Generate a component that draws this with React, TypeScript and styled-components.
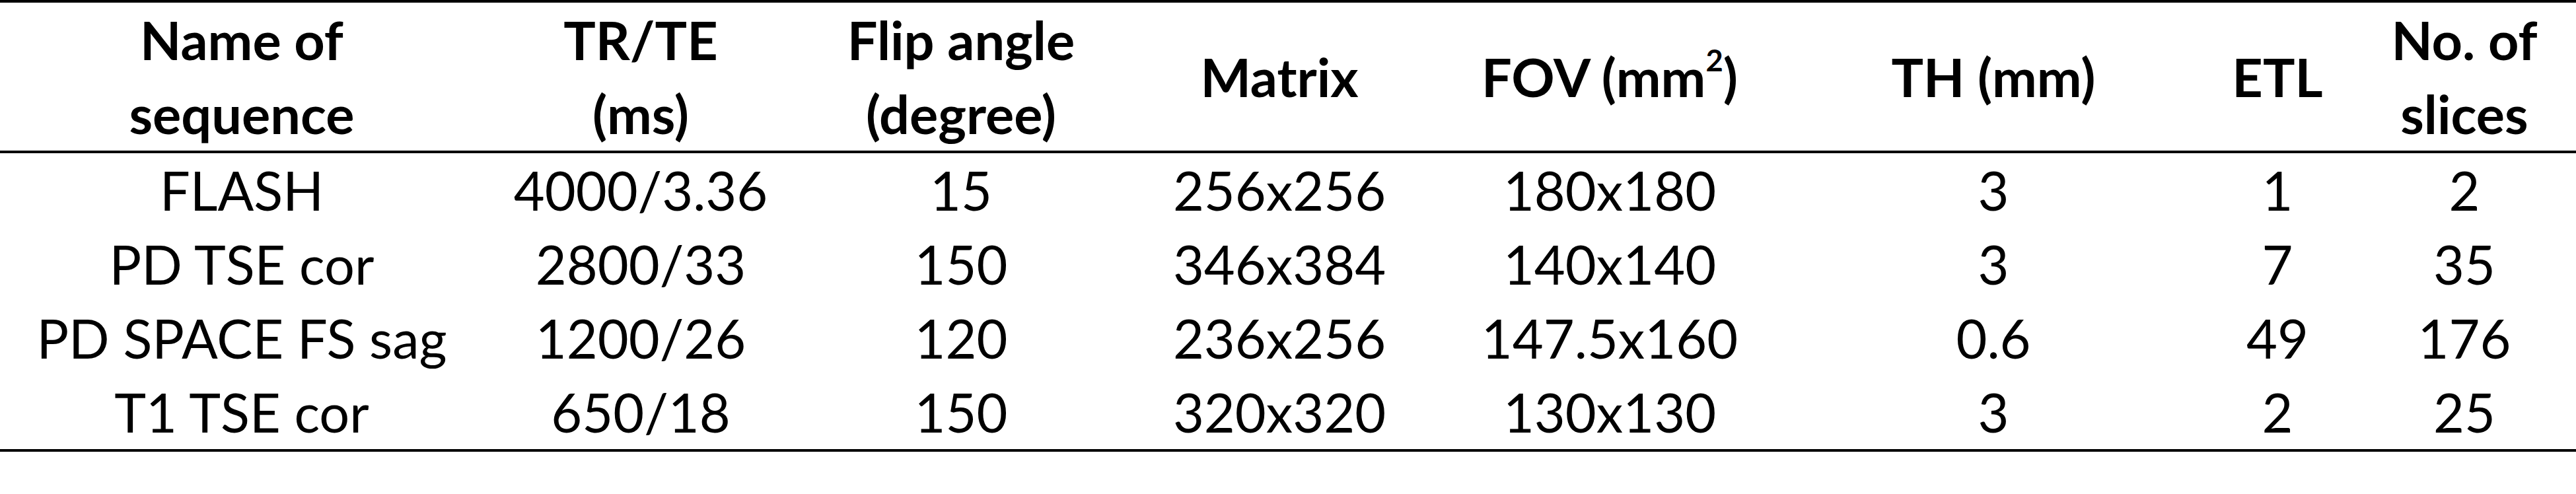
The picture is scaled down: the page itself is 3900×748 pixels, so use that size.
import React from "react";
import styled, { createGlobalStyle, css } from "styled-components";

const Global = createGlobalStyle`
  html, body {
    margin: 0;
    padding: 0;
    background: #ffffff;
  }
  body {
    font-family: Lato, "Open Sans", sans-serif;
    color: #000000;
  }
`;

const columns = css`
  display: grid;
  grid-template-columns: 732px 476px 494px 470px 530px 632px 228px 338px;
`;

const Table = styled.div`
  width: 3900px;
  border-top: 4px solid #000;
  border-bottom: 4px solid #000;
`;

const HeaderRow = styled.div`
  ${columns};
  height: 224px;
  border-bottom: 4px solid #000;
`;

const HeadCell = styled.div`
  display: flex;
  align-items: center;
  justify-content: center;
  text-align: center;
  font-weight: 700;
  font-size: 81px;
  line-height: 112px;
  white-space: nowrap;
`;

const Sup = styled.sup`
  font-size: 0.56em;
  line-height: 0;
  vertical-align: 0;
  position: relative;
  top: -0.85em;
`;

const Body = styled.div`
  display: flex;
  flex-direction: column;
`;

const Row = styled.div`
  ${columns};
  height: 112px;
`;

const Cell = styled.div`
  text-align: center;
  font-weight: 400;
  font-size: 81px;
  line-height: 112px;
  white-space: nowrap;
`;

const headers: React.ReactNode[] = [
  <>Name of<br />sequence</>,
  <>TR/TE<br />(ms)</>,
  <>Flip angle<br />(degree)</>,
  <>Matrix</>,
  <>FOV (mm<Sup>2</Sup>)</>,
  <>TH (mm)</>,
  <>ETL</>,
  <>No. of<br />slices</>,
];

const rows: string[][] = [
  ["FLASH", "4000/3.36", "15", "256x256", "180x180", "3", "1", "2"],
  ["PD TSE cor", "2800/33", "150", "346x384", "140x140", "3", "7", "35"],
  ["PD SPACE FS sag", "1200/26", "120", "236x256", "147.5x160", "0.6", "49", "176"],
  ["T1 TSE cor", "650/18", "150", "320x320", "130x130", "3", "2", "25"],
];

export default function App() {
  return (
    <>
      <Global />
      <Table>
        <HeaderRow>
          {headers.map((h, i) => (
            <HeadCell key={i}>
              <span>{h}</span>
            </HeadCell>
          ))}
        </HeaderRow>
        <Body>
          {rows.map((r, i) => (
            <Row key={i}>
              {r.map((c, j) => (
                <Cell key={j}>{c}</Cell>
              ))}
            </Row>
          ))}
        </Body>
      </Table>
    </>
  );
}
